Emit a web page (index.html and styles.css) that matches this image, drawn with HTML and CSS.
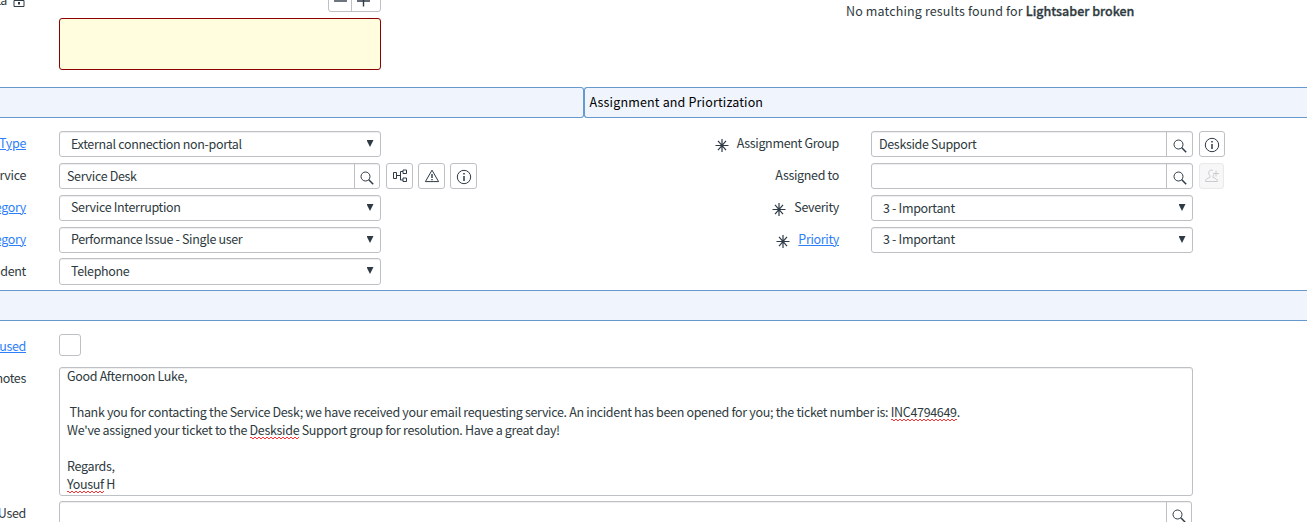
FILE: index.html
```html
<!DOCTYPE html>
<html lang="en">
<head>
<meta charset="utf-8">
<title>Incident</title>
<link rel="stylesheet" href="styles.css">
</head>
<body>
<svg class="defs" width="0" height="0">
  <symbol id="search" viewBox="0 0 14 14"><circle cx="5.5" cy="5.5" r="4.5"/><path d="M8.8 8.800L13.200 13.200" stroke-width="1.5"/></symbol>
  <symbol id="info" viewBox="0 0 16 16"><circle cx="8" cy="8" r="6.7"/><path d="M8 7v5" stroke-width="1.5"/><path d="M8 4v1.600" stroke-width="1.5"/></symbol>
  <symbol id="required" viewBox="0 0 14 14"><path d="M.5 7.500h13M7 1v13M3 2.800l8 9.400M11 2.800l-8 9.400"/></symbol>
</svg>
<main class="page">
  <section class="top">
    <div class="top-left">
      <div class="toolbar">
        <span class="label">ta</span>
        <svg class="lock" viewBox="0 0 12 12"><path d="M1 4.500h10v6H1zM3.500 4.500V1h5v3.500"/><path d="M6 6v2.500" stroke-width="2"/></svg>
        <div class="zoomer">
          <span class="zoom-cell"><svg viewBox="0 0 14 14"><path d="M0 7h14"/></svg></span>
          <span class="zoom-cell wide"><svg viewBox="0 0 14 14"><path d="M0 7h14M7 1v12"/></svg></span>
        </div>
      </div>
      <div class="mandatory-box"></div>
    </div>
    <div class="results">No matching results found for <b>Lightsaber broken</b></div>
  </section>

  <div class="bars">
    <div class="bar bar-left"></div>
    <div class="bar bar-right">Assignment and Priortization</div>
  </div>

  <section class="form">
    <div class="col col-left">
      <div class="row"><span class="label link">Type</span><div class="select">External connection non-portal<i class="arrow"></i></div></div>
      <div class="row"><span class="label">rvice</span>
        <div class="lookup short"><span class="value">Service Desk</span><span class="lens"><svg><use href="#search"/></svg></span></div>
        <span class="btn"><svg class="tree" viewBox="0 0 16 14"><path d="M1.500 3.500h3v6h-3zM4.500 6.500h4M11 2.500H8.500v8.500H11M11 1h3.500v3.500H11zM11 9h3.500v3.500H11z"/></svg></span>
        <span class="btn"><svg class="warn" viewBox="0 0 16 14"><path d="M8 1.200L14.600 12.600H1.400z"/><path d="M8 5v4M8 10v1.300" stroke-width="1.4"/></svg></span>
        <span class="btn"><svg class="info"><use href="#info"/></svg></span>
      </div>
      <div class="row"><span class="label link">egory</span><div class="select raised">Service Interruption<i class="arrow"></i></div></div>
      <div class="row"><span class="label link">egory</span><div class="select raised">Performance Issue - Single user<i class="arrow"></i></div></div>
      <div class="row last"><span class="label">dent</span><div class="select">Telephone<i class="arrow"></i></div></div>
    </div>
    <div class="col col-right">
      <div class="row"><span class="label"><svg class="req"><use href="#required"/></svg>Assignment Group</span>
        <div class="lookup"><span class="value">Deskside Support</span><span class="lens"><svg><use href="#search"/></svg></span></div>
        <span class="btn"><svg class="info"><use href="#info"/></svg></span>
      </div>
      <div class="row"><span class="label">Assigned to</span>
        <div class="lookup"><span class="value"></span><span class="lens"><svg><use href="#search"/></svg></span></div>
        <span class="btn disabled"><svg class="person" viewBox="0 0 15 14"><path d="M8.500 1.500C6 .3 4 1.800 4.200 4c.1 1.500.8 2.200 1.300 3v1.500C3 9.300 1 9.800 1 12.500h12c0-2.500-2-3.200-4.500-4V7l1-1.500M11.500 1.500v6M8.500 4.500h6"/></svg></span>
      </div>
      <div class="row"><span class="label"><svg class="req"><use href="#required"/></svg>Severity</span><div class="select">3 - Important<i class="arrow"></i></div></div>
      <div class="row"><span class="label"><svg class="req"><use href="#required"/></svg><span class="link">Priority</span></span><div class="select raised">3 - Important<i class="arrow"></i></div></div>
    </div>
  </section>

  <div class="bar full"></div>

  <section class="notes">
    <div class="row check-row"><span class="label link">used</span><span class="checkbox"></span></div>
    <div class="row notes-row"><span class="label">notes</span>
      <div class="textarea"><p>Good Afternoon Luke,</p><p></p><p class="long"> Thank you for contacting the Service Desk; we have received your email requesting service. An incident has been opened for you; the ticket number is: <span class="spell">INC4794649</span>.</p><p>We've assigned your ticket to the <span class="spell">Deskside</span> Support group for resolution. Have a great day!</p><p></p><p>Regards,</p><p><span class="spell">Yousuf</span> H</p></div>
    </div>
    <div class="row used-row"><span class="label">Used</span>
      <div class="lookup"><span class="value"></span><span class="lens"><svg><use href="#search"/></svg></span></div>
    </div>
  </section>
</main>
</body>
</html>
```
FILE: styles.css
```css
* { box-sizing: border-box; }
body {
  margin: 0;
  background: #fff;
  color: #2e3a40;
  font: 12.5px/18px "Noto Sans CJK SC", "Open Sans", sans-serif;
  letter-spacing: -.33px;
}
svg { fill: none; stroke: #2e3a46; stroke-width: 1; flex: none; }
p { margin: 0; height: 18px; white-space: pre; }
.defs { display: block; }
.page { width: 1307px; height: 522px; overflow: hidden; }

.top { display: flex; height: 87px; }
.top-left { width: 584px; }
.toolbar { display: flex; height: 12px; margin-bottom: 6px; }
.toolbar .label { margin-top: -12px; width: 7px; }
.lock { width: 12px; height: 12px; margin: -4px 0 0 6px; }
.zoomer {
  display: flex;
  width: 53px; height: 22px;
  margin: -10px 0 0 303px;
  border: 1px solid #bdc0c4; border-radius: 3px;
}
.zoom-cell { width: 23px; display: flex; justify-content: center; align-items: center; border-right: 1px solid #bdc0c4; }
.zoom-cell.wide { width: 28px; border: 0; padding-right: 5px; }
.zoom-cell svg { width: 13px; height: 14px; stroke-width: 1.5; }
.mandatory-box { width: 322px; height: 52px; margin-left: 59px; border: 1px solid #8b0000; border-radius: 3px; background: #fffddd; }
.results { padding: 2px 0 0 262px; white-space: nowrap; letter-spacing: .14px; }
.results b { font-weight: 500; -webkit-text-stroke: .3px; letter-spacing: 0; }

.bars { display: flex; }
.bar { height: 31px; border: 1px solid #6699cc; background: #eff4fd; color: #000; letter-spacing: .16px; }
.bar-left { width: 584px; border-left: 0; border-radius: 0 3px 3px 0; }
.bar-right { flex: 1; border-right: 0; border-radius: 3px 0 0 3px; padding: 5px 0 0 4.5px; }
.full { border-width: 1px 0; }

.form { display: flex; height: 172px; padding-top: 13px; }
.col { display: flex; flex-direction: column; gap: 6px; }
.col-left { width: 584px; }
.row { display: flex; height: 26px; }
.row.last { height: 27px; margin-top: -1px; }
.label { display: flex; justify-content: flex-end; width: 26px; flex: none; padding-top: 3px; white-space: nowrap; }
.last .label { padding-top: 4px; }
.col-right .label { width: 255px; }
.link { color: #2d7ff9; text-decoration: underline; }
.req { width: 14px; height: 14px; margin: 4px 8px 0 0; stroke-width: 1.2; }
.select, .lookup, .btn, .checkbox, .textarea { border: 1px solid #bdc0c4; border-radius: 3px; background: #fff; }
.select, .lookup { display: flex; width: 322px; margin-left: 33px; box-shadow: inset 0 1px 1px #eee; }
.col-right .select, .col-right .lookup { margin-left: 32px; }
.select { padding: 3px 6.5px 0 11px; justify-content: space-between; }
.select.raised { padding-top: 2px; }
.arrow { width: 7px; height: 7px; margin-top: 5px; background: #2e3a46; clip-path: polygon(0 0, 100% 0, 50% 100%); }
.raised .arrow { margin-top: 6px; }
.lookup.short { width: 321px; }
.value { flex: 1; padding: 3px 0 0 7px; }
.lens { width: 26px; border-left: 1px solid #bdc0c4; padding: 7px 0 0 6px; }
.short .lens, .used-row .lens { width: 25px; padding-left: 5px; }
.lens svg { display: block; width: 14px; height: 14px; }
.btn { display: flex; align-items: center; justify-content: center; width: 27px; margin-left: 5px; }
.lookup + .btn { margin-left: 6px; }
.col-right .btn { width: 26px; }
.btn svg { width: 16px; height: 14px; }
.btn svg.info { width: 16px; height: 16px; margin-top: 2px; }
.col-right .btn.disabled { width: 25px; background: #f7f7f7; border-color: #e8e9ea; }
.disabled svg { stroke: #c8cccf; }

.check-row { margin-top: 13px; height: 22px; }
.check-row .label { padding-top: 3px; }
.checkbox { width: 22px; height: 22px; margin-left: 33px; }
.notes-row { margin-top: 11px; height: 129px; }
.notes-row .label { padding-top: 2px; }
.textarea { width: 1134px; margin-left: 33px; padding-left: 7px; box-shadow: inset 0 1px 1px #eee; }
.textarea p { position: relative; top: -1px; letter-spacing: -.323px; }
.used-row { margin-top: 5px; }
.used-row .lookup { width: 1133px; }
.spell {
  display: inline-block; height: 18px;
  background:
    repeating-linear-gradient(90deg, #f33 0 2px, transparent 2px 4px) 0 16px / 100% 1px no-repeat,
    repeating-linear-gradient(90deg, transparent 0 2px, #f33 2px 4px) 0 17px / 100% 1px no-repeat;
}
```
